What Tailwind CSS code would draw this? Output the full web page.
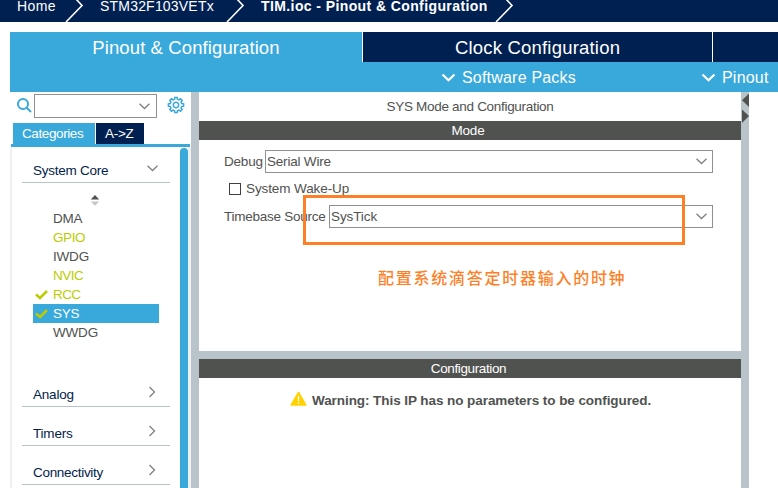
<!DOCTYPE html>
<html lang="en">
<head>
<meta charset="utf-8">
<title>TIM.ioc - Pinout &amp; Configuration</title>
<script src="https://cdn.jsdelivr.net/npm/@tailwindcss/browser@4"></script>
</head>
<body class="w-[778px] h-[488px] overflow-hidden bg-white flex flex-col font-['Liberation_Sans',Arial,sans-serif] text-[13.5px] tracking-[-.2px] leading-[19px] text-[#505250] whitespace-nowrap">
  <!-- Breadcrumb -->
  <header class="h-[22px] shrink-0 bg-[#002052] text-white text-[14px] leading-[12px] flex pl-[17px]">
    <span class="w-[48px] tracking-[.4px]">Home</span>
    <svg class="w-[19px] h-[22px] shrink-0" viewBox="0 0 19 22" fill="none" stroke="#fff" stroke-width="1.6"><path d="M11 -1L17 5.500L1 22"/></svg>
    <span class="w-[126px] pl-[16px] tracking-[.2px]">STM32F103VETx</span>
    <svg class="w-[51px] h-[22px] shrink-0" viewBox="0 0 51 22" fill="none" stroke="#fff" stroke-width="1.6"><path d="M27 -1L33 5.500L17 22"/></svg>
    <span class="w-[233px] font-bold tracking-[.4px]">TIM.ioc - Pinout &amp; Configuration</span>
    <svg class="w-[22px] h-[22px] shrink-0" viewBox="0 0 22 22" fill="none" stroke="#fff" stroke-width="1.600"><path d="M12 -1L18 5.500L2 22"/></svg>
  </header>

  <!-- Main tabs -->
  <nav class="mt-[10px] ml-[10px] h-[30px] shrink-0 flex text-white text-[18.500px] leading-[31px] text-center">
    <div class="w-[352px] bg-[#39a9dc] tracking-[.1px]">Pinout &amp; Configuration</div>
    <div class="w-[350px] border-l border-white bg-[#002052] tracking-[.2px]">Clock Configuration</div>
    <div class="flex-1 border-l border-white bg-[#002052]"></div>
  </nav>
  <div class="ml-[10px] h-[30px] shrink-0 bg-[#39a9dc] text-white text-[16px] leading-[30px] flex items-center pl-[431px]">
    <svg class="w-[15px] h-[9px] mr-[6px]" viewBox="0 0 15 9" fill="none" stroke="#fff" stroke-width="2.2"><path d="M1.500 1.500L7.500 7.200L13.500 1.500"/></svg>
    <span class="w-[239px] tracking-[.2px] pt-[1px]">Software Packs</span>
    <svg class="w-[15px] h-[9px] mr-[6px]" viewBox="0 0 15 9" fill="none" stroke="#fff" stroke-width="2.2"><path d="M1.500 1.500L7.500 7.200L13.500 1.500"/></svg>
    <span class="tracking-[.2px] pt-[1px]">Pinout</span>
  </div>

  <main class="flex flex-1 min-h-0 pl-[10px]">
    <!-- Peripheral browser -->
    <aside class="w-[181px] shrink-0 flex flex-col">
      <div class="h-[31px] shrink-0 flex pt-[2px] pl-[6px]">
        <svg class="w-[16px] h-[16px] mt-[3px] mr-[2px]" viewBox="0 0 16 16" fill="none" stroke="#39a9dc" stroke-width="2"><circle cx="7" cy="7" r="5"/><path d="M10.500 10.500L15 15"/></svg>
        <div class="w-[123px] h-[24px] border border-[#8c9197] flex items-center justify-end pr-[6px]">
          <svg class="w-[11px] h-[7px]" viewBox="0 0 11 7" fill="none" stroke="#808080" stroke-width="1.300"><path d="M.5 .8L5.500 5.500L10.500 .8"/></svg>
        </div>
        <svg class="w-[18px] h-[18px] ml-[10px] mt-[2px]" viewBox="-9 -9 18 18" fill="none" stroke="#39a9dc" stroke-width="1.500"><circle r="2.700"/><path d="M-1.500 -5.700L-1.200 -7.600H1.200L1.500 -5.700L2.900 -5.100L4.500 -6.200L6.200 -4.500L5.100 -2.900L5.700 -1.500L7.600 -1.200V1.200L5.700 1.500L5.100 2.900L6.200 4.500L4.500 6.200L2.900 5.100L1.500 5.700L1.200 7.600H-1.200L-1.500 5.700L-2.900 5.100L-4.500 6.200L-6.200 4.500L-5.100 2.900L-5.700 1.500L-7.600 1.200V-1.200L-5.700 -1.500L-5.100 -2.900L-6.200 -4.500L-4.500 -6.200L-2.900 -5.100Z"/></svg>
      </div>
      <div class="h-[21px] shrink-0 flex pl-[3px] text-white leading-[21px] gap-px">
        <div class="w-[82px] bg-[#39a9dc] pl-[9px] tracking-[-.4px]">Categories</div>
        <div class="w-[48px] bg-[#002052] pl-[9px] tracking-[-.3px]">A-&gt;Z</div>
      </div>
      <div class="h-[3px] shrink-0 bg-[#39a9dc] ml-px mr-px"></div>
      <div class="flex-1 min-h-0 flex border-l-2 border-[#f0f0f0]">
        <div class="w-[168px] pl-[10px] pr-[10px] overflow-hidden">
          <div class="h-[36px] border-b border-[#b8c4ca] pl-[11px] pt-[14px] text-[#03234b] flex justify-between pr-[12px]">
            <span class="tracking-[-.25px]">System Core</span>
            <svg class="w-[11px] h-[7px] mt-[4px]" viewBox="0 0 11 7" fill="none" stroke="#808080" stroke-width="1.300"><path d="M.5 .8L5.500 5.500L10.500 .8"/></svg>
          </div>
          <ul class="mt-[11px] pt-[15px] pl-[11px] relative h-[167px]">
            <svg class="absolute left-[68px] top-0 w-[10px] h-[12px]" viewBox="0 0 10 12"><path d="M.8 5.500L5 1L9.200 5.500Z" fill="#505250"/><path d="M.8 7.500L5 11.800L9.200 7.500Z" fill="#c6c6c6"/></svg>
            <li class="w-[126px] h-[19px] pl-[20px]">DMA</li>
            <li class="w-[126px] h-[19px] pl-[20px] text-[#bbcc00] tracking-[-.4px]">GPIO</li>
            <li class="w-[126px] h-[19px] pl-[20px]">IWDG</li>
            <li class="w-[126px] h-[19px] pl-[20px] text-[#bbcc00] tracking-[-.5px]">NVIC</li>
            <li class="w-[126px] h-[19px] pl-[2px] text-[#bbcc00] tracking-[-.6px] flex items-center"><svg class="w-[13px] h-[10px] mr-[5px]" viewBox="0 0 13 10" fill="none" stroke="#bbcc00" stroke-width="2.500"><path d="M1 4.500L5 8L12 1"/></svg>RCC</li>
            <li class="w-[126px] h-[19px] pl-[2px] bg-[#39a9dc] text-white flex items-center"><svg class="w-[13px] h-[10px] mr-[5px]" viewBox="0 0 13 10" fill="none" stroke="#bbcc00" stroke-width="2.500"><path d="M1 4.500L5 8L12 1"/></svg>SYS</li>
            <li class="w-[126px] h-[19px] pl-[20px]">WWDG</li>
          </ul>
          <div class="h-[46px] border-b border-[#b8c4ca] pl-[11px] pt-[24px] text-[#03234b] flex justify-between pr-[14px]"><span>Analog</span><svg class="w-[8px] h-[12px] mt-[1px]" viewBox="0 0 8 12" fill="none" stroke="#808080" stroke-width="1.300"><path d="M1.500 1L6.500 6L1.500 11"/></svg></div>
          <div class="h-[39px] border-b border-[#b8c4ca] pl-[11px] pt-[17px] text-[#03234b] flex justify-between pr-[14px]"><span>Timers</span><svg class="w-[8px] h-[12px] mt-[1px]" viewBox="0 0 8 12" fill="none" stroke="#808080" stroke-width="1.300"><path d="M1.500 1L6.500 6L1.500 11"/></svg></div>
          <div class="h-[39px] border-b border-[#b8c4ca] pl-[11px] pt-[17px] text-[#03234b] flex justify-between pr-[14px]"><span class="tracking-[-.3px]">Connectivity</span><svg class="w-[8px] h-[12px] mt-[1px]" viewBox="0 0 8 12" fill="none" stroke="#808080" stroke-width="1.300"><path d="M1.500 1L6.500 6L1.500 11"/></svg></div>
        </div>
        <div class="w-[8px] mt-[1px] rounded-t-[4px] bg-[#39a9dc]"></div>
        <div class="w-[3px] bg-[#f0f0f0]"></div>
      </div>
    </aside>
    <div class="w-[8px] shrink-0 bg-[#b8c4ca]"></div>

    <!-- Mode and configuration -->
    <section class="w-[542px] shrink-0 flex flex-col">
      <div class="h-[29px] shrink-0 text-center leading-[29px] tracking-[-.3px]">SYS Mode and Configuration</div>
      <div class="h-[19px] shrink-0 bg-[#505250] text-white text-center pr-[4px]">Mode</div>
      <div class="h-[211px] shrink-0 relative pl-[25px] pr-[28px] pt-[10px]">
        <div class="h-[23px] flex items-center">
          <span class="w-[41px]">Debug</span>
          <div class="flex-1 h-[23px] border border-[#8c9197] flex items-center justify-between pl-[1px] pr-[5px]"><span>Serial Wire</span><svg class="w-[11px] h-[7px]" viewBox="0 0 11 7" fill="none" stroke="#808080" stroke-width="1.300"><path d="M.5 .8L5.500 5.500L10.500 .8"/></svg></div>
        </div>
        <div class="h-[32px] flex items-center pl-[5px]"><span class="w-[12px] h-[12px] border border-[#404040] mr-[5px]"></span><span class="tracking-[-.1px] -mt-px">System Wake-Up</span></div>
        <div class="h-[23px] flex items-center">
          <span class="w-[105px] tracking-[-.26px]">Timebase Source</span>
          <div class="flex-1 h-[23px] border border-[#8c9197] flex items-center justify-between pl-[1px] pr-[5px]"><span class="tracking-[-.1px]">SysTick</span><svg class="w-[11px] h-[7px]" viewBox="0 0 11 7" fill="none" stroke="#808080" stroke-width="1.300"><path d="M.5 .8L5.500 5.500L10.500 .8"/></svg></div>
        </div>
        <!-- Annotations -->
        <div class="absolute left-[104px] top-[55px] w-[382px] h-[50px] border-[3px] border-[#ff7f27]"></div>
        <div class="absolute left-[179px] top-[125px] text-[16px] leading-[24px] tracking-[1.740px] font-medium text-[#ff7f27] font-['Noto_Sans_CJK_SC',sans-serif]" lang="zh-CN">配置系统滴答定时器输入的时钟</div>
      </div>
      <div class="h-[8px] shrink-0 bg-[#b8c4ca]"></div>
      <div class="h-[19px] shrink-0 bg-[#505250] text-white text-center pr-[3px] tracking-[-.38px]">Configuration</div>
      <div class="flex-1 flex justify-start items-start pt-[12px] pl-[91px]">
        <svg class="w-[17px] h-[16px] mt-[1px] mr-[5px]" viewBox="0 0 17 16"><path d="M8.500 1.500L15.800 14H1.200Z" fill="#ffd200" stroke="#ffd200" stroke-width="1.500" stroke-linejoin="round"/><path d="M8.500 5V10M8.500 11.200V12.700" stroke="#fff" stroke-width="1.300"/></svg>
        <span class="font-bold tracking-[-.07px] pt-px">Warning: This IP has no parameters to be configured.</span>
      </div>
    </section>
    <div class="w-[8px] shrink-0 bg-[#b8c4ca]">
      <svg class="w-[8px] h-[32px]" viewBox="0 0 8 32" fill="#505250"><path d="M8 1.500V15L1 8.200Z"/><path d="M1 17.500L8 24L1 31Z"/></svg>
    </div>
  </main>
</body>
</html>
